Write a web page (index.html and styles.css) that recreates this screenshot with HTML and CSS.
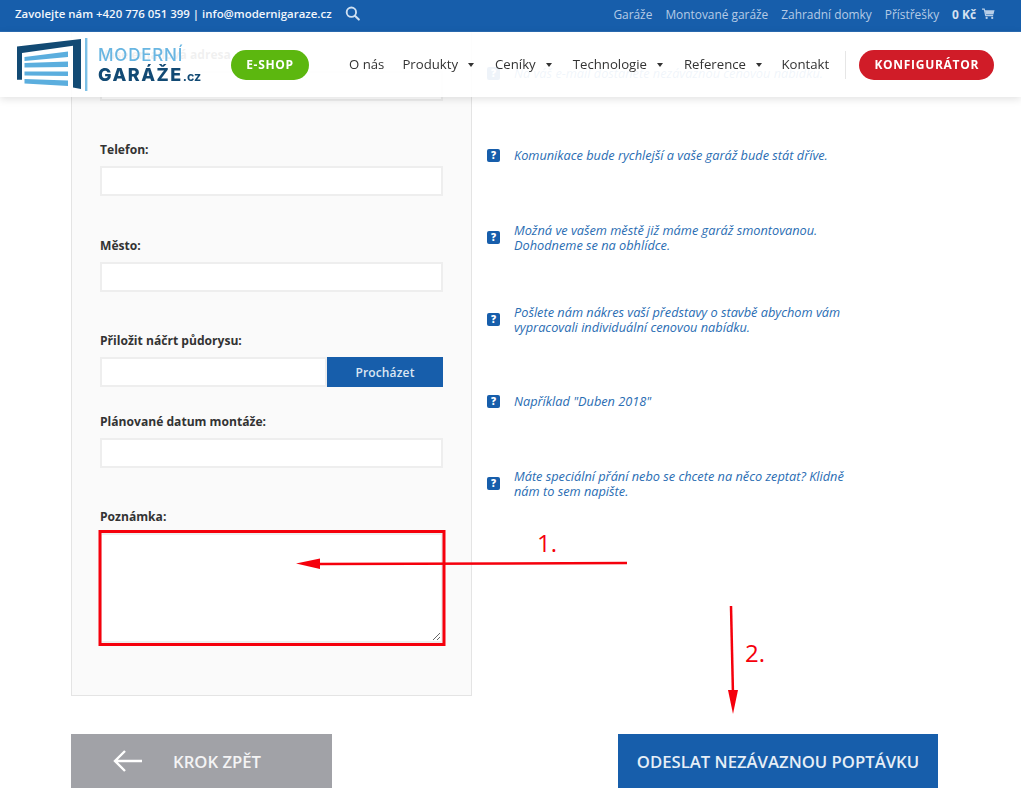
FILE: index.html
```html
<!DOCTYPE html>
<html lang="cs">
<head>
<meta charset="utf-8">
<title>Moderní garáže</title>
<link rel="stylesheet" href="styles.css">
</head>
<body>
<header class="site-header">
  <div class="topbar">
    <div class="topbar-left">
      <span class="contact">Zavolejte nám +420 776 051 399 | info@modernigaraze.cz</span>
      <svg class="search-icon" viewBox="0 0 16 16" width="15" height="15"><circle cx="6.8" cy="6.6" r="5" fill="none" stroke="#cfe0f2" stroke-width="2"/><path d="M10.6 10.4l4.1 4.1" stroke="#cfe0f2" stroke-width="2.2" stroke-linecap="round"/></svg>
    </div>
    <nav class="topbar-right">
      <a>Garáže</a><a>Montované garáže</a><a>Zahradní domky</a><a>Přístřešky</a>
      <span class="cart"><b>0 Kč</b>
        <svg viewBox="0 0 14 12" width="13" height="12"><path d="M0 .8h2.400l1.600 7h8" fill="none" stroke="#b9cfe8" stroke-width="1.300"/><path d="M3 2h10.500l-1.200 4.600H4z" fill="#b9cfe8"/><circle cx="5" cy="10.200" r="1.200" fill="#b9cfe8"/><circle cx="11" cy="10.200" r="1.200" fill="#b9cfe8"/></svg>
      </span>
    </nav>
  </div>
  <div class="navbar">
    <a class="logo">
      <svg class="logo-mark" viewBox="0 0 71 54" width="71" height="54">
        <path d="M0 8.500L64 1V51L56 49.500V7.700L5 15V41.700H0Z" fill="#124a74"/>
        <path d="M7.500 19L51 13.500V19L7.500 23Z M7.500 25L51 23.500V29L7.500 29.500Z M7.500 33.500H51V38L7.500 37.500Z M7.500 41L51 42.500V48L7.500 45.500Z" fill="#5baede"/>
        <path d="M68 0h2.400v53H68z" fill="#7cc0e6"/>
      </svg>
      <span class="logo-text">
        <span class="logo-top">MODERNÍ</span>
        <span class="logo-bottom">GARÁŽE<small>.cz</small></span>
      </span>
    </a>
    <a class="pill pill-green">E-SHOP</a>
    <nav class="menu">
      <a class="menu-first">O nás</a>
      <a class="has-caret">Produkty</a>
      <a class="has-caret">Ceníky</a>
      <a class="has-caret">Technologie</a>
      <a class="has-caret">Reference</a>
      <a class="menu-last">Kontakt</a>
    </nav>
    <span class="divider"></span>
    <a class="pill pill-red">KONFIGURÁTOR</a>
  </div>
</header>

<main class="page">
  <div class="columns">
    <form class="panel">
      <div class="field">
        <label>Vaše emailová adresa</label>
        <input class="control" type="text">
      </div>
      <div class="field">
        <label>Telefon:</label>
        <input class="control" type="text">
      </div>
      <div class="field">
        <label>Město:</label>
        <input class="control" type="text">
      </div>
      <div class="field field-tight">
        <label>Přiložit náčrt půdorysu:</label>
        <div class="file-row">
          <input class="control" type="text">
          <span class="browse">Procházet</span>
        </div>
      </div>
      <div class="field field-plan">
        <label>Plánované datum montáže:</label>
        <input class="control" type="text">
      </div>
      <div class="field field-last">
        <label>Poznámka:</label>
        <textarea class="control area"></textarea>
      </div>
    </form>
    <aside class="hints">
      <div class="hint"><span class="q">?</span><p>Na váš e-mail dostanete nezávaznou cenovou nabídku.</p></div>
      <div class="hint"><span class="q">?</span><p>Komunikace bude rychlejší a vaše garáž bude stát dříve.</p></div>
      <div class="hint"><span class="q">?</span><p>Možná ve vašem městě již máme garáž smontovanou. Dohodneme se na obhlídce.</p></div>
      <div class="hint"><span class="q">?</span><p>Pošlete nám nákres vaší představy o stavbě abychom vám vypracovali individuální cenovou nabídku.</p></div>
      <div class="hint"><span class="q">?</span><p>Například "Duben 2018"</p></div>
      <div class="hint"><span class="q">?</span><p>Máte speciální přání nebo se chcete na něco zeptat? Klidně nám to sem napište.</p></div>
    </aside>
  </div>
  <div class="actions">
    <a class="btn btn-back">
      <svg viewBox="0 0 30 24" width="30" height="24"><path d="M29 12H2M12 2L2 12l10 10" fill="none" stroke="#fff" stroke-width="2.400"/></svg>
      <span>KROK ZPĚT</span>
    </a>
    <a class="btn btn-send">ODESLAT NEZÁVAZNOU POPTÁVKU</a>
  </div>
</main>

<svg class="annot" viewBox="0 0 1021 800" width="1021" height="800">
  <rect x="100" y="531.500" width="344" height="113" fill="none" stroke="#f5000c" stroke-width="3"/>
  <path d="M627 563L318 564" stroke="#f5000c" stroke-width="2.500" fill="none"/>
  <path d="M296 563.500L320 558.500V569Z" fill="#f5000c"/>
  <path d="M731 606L733 695" stroke="#f5000c" stroke-width="2.500" fill="none"/>
  <path d="M733 714L728 690H738Z" fill="#f5000c"/>
</svg>
<span class="note note-1">1.</span>
<span class="note note-2">2.</span>
</body>
</html>
```
FILE: styles.css
```css
* { box-sizing: border-box; }
html, body { margin: 0; height: 800px; overflow: hidden; background: #fff; }
body { font-family: "Open Sans", "Liberation Sans", sans-serif; color: #333; position: relative; }
a { text-decoration: none; color: inherit; }

.site-header { position: fixed; top: 0; left: 0; width: 1021px; z-index: 5; }
.topbar { height: 32px; background: #175eab; display: flex; justify-content: space-between; align-items: center; padding: 0 26px 4px 15px; border-bottom: 1px solid #2b6db4; }
.topbar-left { display: flex; align-items: center; gap: 13px; }
.contact { color: #f2f6fb; font-size: 11.430px; font-weight: 600; white-space: nowrap; }
.search-icon { display: block; }
.topbar-right { display: flex; align-items: center; gap: 13px; font-size: 11.900px; color: #b5cbe6; }
.cart { display: flex; align-items: center; gap: 6px; }
.cart b { font-weight: 700; color: #d5e2f1; }
.cart svg { display: block; }

.navbar { height: 65px; background: rgba(255,255,255,.93); box-shadow: 0 2px 8px rgba(0,0,0,.12); display: flex; align-items: center; padding: 0 27px 0 17px; }
.logo { display: flex; align-items: center; gap: 10px; width: 214px; flex: none; }
.logo-mark { display: block; flex: none; margin-top: 1px; }
.logo-text { display: flex; flex-direction: column; font-family: "Inter", "Liberation Sans", sans-serif; line-height: 20px; padding-top: 2px; white-space: nowrap; }
.logo-top { font-size: 17px; font-weight: 500; letter-spacing: .8px; color: #69b6e2; }
.logo-bottom { font-size: 18px; font-weight: 800; letter-spacing: 1.500px; color: #124a74; }
.logo-bottom small { font-size: 12.500px; font-weight: 700; letter-spacing: 0; }
.pill { height: 30px; border-radius: 15px; display: flex; align-items: center; justify-content: center; color: #fff; font-weight: 700; font-size: 12px; letter-spacing: .7px; flex: none; }
.pill-green { width: 78px; background: #5cb70f; }
.pill-red { width: 135px; background: #d01c28; }
.menu { display: flex; align-items: center; gap: 21px; margin-left: 40px; padding-bottom: 2px; font-size: 13.200px; color: #333; white-space: nowrap; flex: none; }
.menu-first { margin-right: -3px; }
.menu-last { margin-left: -1.500px; }
.has-caret { display: flex; align-items: center; gap: 10px; }
.has-caret::after { content: ""; border: 3px solid transparent; border-top: 4px solid #333; border-bottom: 0; margin-top: 2px; }
.divider { width: 1px; height: 28px; background: #e6e6e6; margin: 0 13px 0 16px; flex: none; }

.page { padding: 0 83px 0 71px; }
.columns { display: flex; }
.panel { width: 401px; height: 696px; flex: none; background: #fafafa; border: 1px solid #e4e4e4; border-top: 0; padding: 44.500px 28px 0; }
.field { margin-bottom: 39.500px; }
.field-tight { margin-bottom: 25px; }
.field-plan { margin-bottom: 39px; }
.field-last { margin-bottom: 0; }
.field label { display: block; font-size: 12.100px; line-height: 20px; font-weight: 700; color: #333; margin-bottom: 6px; }
.control { display: block; width: 100%; height: 30px; background: #fff; border: 2px solid #eee; border-radius: 0; padding: 0; margin: 0; outline: 0; }
.area { height: 110px; resize: vertical; }
.file-row { display: flex; }
.file-row .control { flex: 1; width: auto; min-width: 0; }
.browse { width: 116px; height: 30px; background: #175eab; color: #dbe6f3; font-size: 12px; font-weight: 600; letter-spacing: .15px; display: flex; align-items: center; justify-content: center; }

.hints { padding: 32px 0 0 15px; }
.hint { height: 82px; display: flex; align-items: center; gap: 14px; width: 377px; }
.q { width: 13px; height: 13px; flex: none; background: #175eab; border-radius: 2px; color: #fff; font-size: 10px; font-weight: 800; line-height: 13px; text-align: center; }
.hint p { margin: 0; padding-top: 2px; font-size: 12.750px; line-height: 15.500px; font-style: italic; color: #2a6db3; width: 350px; }

.actions { display: flex; justify-content: space-between; margin-top: 38px; }
.btn { height: 54px; display: flex; align-items: center; color: #fff; font-size: 16.700px; font-weight: 600; flex: none; }
.btn-back { width: 261px; background: #a1a2a7; padding-left: 42px; gap: 30px; color: #f4f4f5; }
.btn-send { width: 320px; background: #175eab; justify-content: center; color: #e6eef7; }

.annot { position: absolute; top: 0; left: 0; z-index: 3; pointer-events: none; }
.note { position: absolute; z-index: 3; color: #f5000c; font-size: 24px; line-height: 28px; }
.note-1 { left: 537px; top: 529px; }
.note-2 { left: 745px; top: 639px; }
```
